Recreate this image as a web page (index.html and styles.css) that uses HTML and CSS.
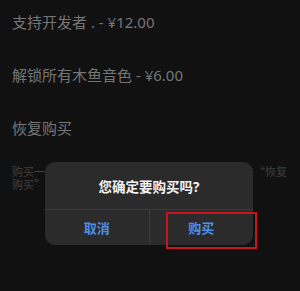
FILE: index.html
```html
<!DOCTYPE html>
<html lang="zh-CN">
<head>
  <meta charset="UTF-8">
  <title>购买</title>
  <meta name="viewport" content="width=device-width, initial-scale=1.0">
  <link rel="stylesheet" href="styles.css">
</head>
<body>
  <div class="page">
    <div class="item">支持开发者 . - ¥12.00</div>
    <div class="item">解锁所有木鱼音色 - ¥6.00</div>
    <div class="item">恢复购买</div>
    <p class="note">购买一次，永久有效。更换设备或重装后，可点击“恢复<br>购买”来恢复您之前的购买记录。</p>
  </div>

  <div class="mask"></div>
  <div class="dialog">
    <div class="dialog-title">您确定要购买吗?</div>
    <div class="dialog-buttons">
      <button class="dialog-btn">取消</button>
      <button class="dialog-btn">购买</button>
    </div>
  </div>
  <div class="highlight"></div>
</body>
</html>
```

FILE: styles.css
```css
body {
  margin: 0;
  background-color: #151515;
  font-family: "Noto Sans", "Noto Sans CJK SC", sans-serif;
  height: 291px;
  overflow: hidden;
}
.page {
  padding: 12px 12px 0;
}
.item {
  color: #8a8a8a;
  font-size: 15px;
  line-height: 20px;
  height: 20px;
  margin-bottom: 33px;
}
.note {
  margin: -6px 0 0;
  color: #4a4a4a;
  font-size: 11px;
  line-height: 13px;
  font-family: "Noto Sans CJK SC", sans-serif;
}
.mask {
  position: absolute;
  top: 0;
  left: 0;
  right: 0;
  bottom: 0;
  background-color: rgba(0, 0, 0, 0.15);
}
.dialog {
  position: absolute;
  left: 45px;
  top: 162px;
  width: 208px;
  height: 83px;
  background-color: #2b2b2b;
  border-radius: 10px;
  display: flex;
  flex-direction: column;
  overflow: hidden;
}
.dialog-title {
  height: 48px;
  display: flex;
  align-items: center;
  justify-content: center;
  color: #f2f2f2;
  font-size: 13.5px;
  font-weight: bold;
  border-bottom: 1px solid #3b3b3b;
  box-sizing: border-box;
}
.dialog-buttons {
  flex: 1;
  display: flex;
}
.dialog-btn {
  flex: 1;
  background: none;
  border: none;
  color: #4d8fe6;
  font-family: "Noto Sans CJK SC", sans-serif;
  font-size: 13px;
  font-weight: bold;
  padding: 0;
  cursor: pointer;
}
.dialog-btn + .dialog-btn {
  border-left: 1px solid #3b3b3b;
}
.highlight {
  position: absolute;
  left: 166px;
  top: 212px;
  width: 87px;
  height: 33px;
  border: 2px solid #c8141c;
}
```
